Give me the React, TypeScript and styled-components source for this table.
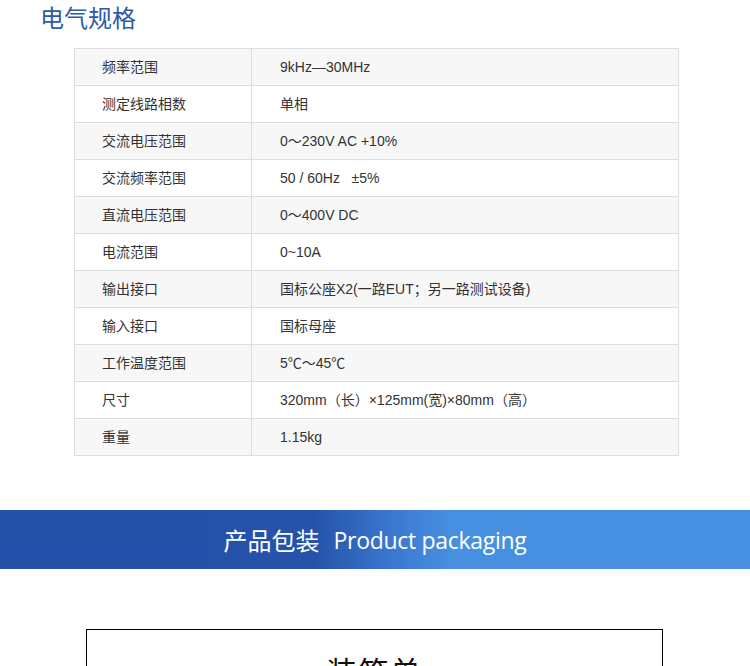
import styled, { createGlobalStyle } from "styled-components";

const GlobalStyle = createGlobalStyle`
  body {
    margin: 0;
    background: #fff;
    font-family: "Liberation Sans", Arial, "Noto Sans CJK SC", sans-serif;
  }
`;

const Page = styled.main`
  width: 750px;
  overflow: hidden;
`;

const Heading = styled.h2`
  margin: 0;
  padding: 0 0 0 40px;
  height: 48px;
  line-height: 34px;
  font-size: 24px;
  font-weight: normal;
  color: #2d5aa9;
  font-family: "Microsoft YaHei", "Noto Sans CJK SC", sans-serif;
`;

const SpecTable = styled.table`
  width: 605px;
  margin-left: 74px;
  border-collapse: collapse;
  font-size: 14px;
  color: #333;
`;

const Row = styled.tr<{ $shaded: boolean }>`
  height: 37px;
  background: ${(p) => (p.$shaded ? "#f7f7f7" : "#fff")};
`;

const Cell = styled.td<{ $label?: boolean }>`
  border: 1px solid #ddd;
  padding: 0 0 0 ${(p) => (p.$label ? 27 : 28)}px;
  width: ${(p) => (p.$label ? "149px" : "auto")};
  vertical-align: middle;
  line-height: 18px;
`;

const Banner = styled.div`
  margin-top: 54px;
  height: 59px;
  display: flex;
  align-items: center;
  justify-content: center;
  gap: 14px;
  color: #fff;
  font-size: 24px;
  background: linear-gradient(
    90deg,
    #2350a8 0%,
    #2553aa 42%,
    #3b77cf 52%,
    #478fe0 60%,
    #478fe0 100%
  );
  font-family: "Microsoft YaHei", "Noto Sans CJK SC", sans-serif;
`;

const BannerEn = styled.span`
  font-family: "Open Sans", "Noto Sans", sans-serif;
  letter-spacing: -0.3px;
  font-size: 23px;
`;

const PackBox = styled.section`
  margin: 60px 0 0 86px;
  width: 577px;
  height: 120px;
  border: 1px solid #000;
  box-sizing: border-box;
`;

const PackTitle = styled.h3`
  margin: 18px 0 0;
  text-align: center;
  font-size: 30px;
  font-weight: normal;
  color: #111;
  font-family: "Noto Sans CJK SC", sans-serif;
  letter-spacing: 2px;
`;

const specs: [string, string][] = [
  ["频率范围", "9kHz—30MHz"],
  ["测定线路相数", "单相"],
  ["交流电压范围", "0～230V AC +10%"],
  ["交流频率范围", "50 / 60Hz \u00a0 ±5%"],
  ["直流电压范围", "0～400V DC"],
  ["电流范围", "0~10A"],
  ["输出接口", "国标公座X2(一路EUT；另一路测试设备)"],
  ["输入接口", "国标母座"],
  ["工作温度范围", "5℃～45℃"],
  ["尺寸", "320mm（长）×125mm(宽)×80mm（高）"],
  ["重量", "1.15kg"],
];

export default function App() {
  return (
    <Page>
      <GlobalStyle />
      <Heading>电气规格</Heading>
      <SpecTable>
        <tbody>
          {specs.map(([k, v], i) => (
            <Row key={k} $shaded={i % 2 === 0}>
              <Cell $label>{k}</Cell>
              <Cell>{v}</Cell>
            </Row>
          ))}
        </tbody>
      </SpecTable>
      <Banner>
        <span>产品包装</span>
        <BannerEn>Product packaging</BannerEn>
      </Banner>
      <PackBox>
        <PackTitle>装箱单</PackTitle>
      </PackBox>
    </Page>
  );
}
